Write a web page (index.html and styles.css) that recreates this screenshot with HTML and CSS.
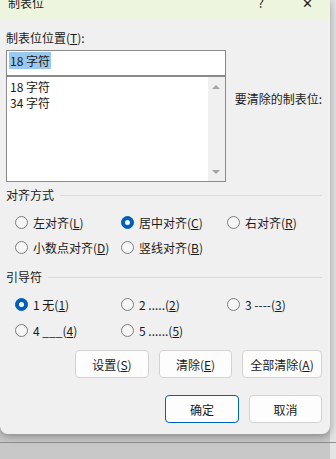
FILE: index.html
```html
<!DOCTYPE html>
<html lang="zh-CN">
<head>
    <meta charset="UTF-8">
    <meta name="viewport" content="width=device-width, initial-scale=1.0">
    <title>制表位</title>
    <link rel="stylesheet" href="styles.css">
</head>
<body>
    <div class="dialog">
        <!-- 标题栏 -->
        <div class="titlebar">
            <span class="title">制表位</span>
            <span class="help">?</span>
            <span class="close">✕</span>
        </div>

        <div class="content">
            <div class="tab-row">
                <div class="tab-left">
                    <div class="label">制表位位置(<u>T</u>):</div>
                    <div class="input"><span class="selected">18 字符</span></div>
                    <div class="list">
                        <div class="list-items">
                            <div>18 字符</div>
                            <div>34 字符</div>
                        </div>
                        <div class="scrollbar">
                            <span class="arrow up"></span>
                            <span class="arrow down"></span>
                        </div>
                    </div>
                </div>
                <div class="tab-right">要清除的制表位:</div>
            </div>

            <div class="group-title first"><span>对齐方式</span></div>
            <div class="radios">
                <label class="radio"><span class="dot"></span>左对齐(<u>L</u>)</label>
                <label class="radio"><span class="dot checked"></span>居中对齐(<u>C</u>)</label>
                <label class="radio"><span class="dot"></span>右对齐(<u>R</u>)</label>
                <label class="radio"><span class="dot"></span>小数点对齐(<u>D</u>)</label>
                <label class="radio"><span class="dot"></span>竖线对齐(<u>B</u>)</label>
            </div>

            <div class="group-title second"><span>引导符</span></div>
            <div class="radios leaders">
                <label class="radio"><span class="dot checked"></span>1 无(<u>1</u>)</label>
                <label class="radio"><span class="dot"></span>2 .....(<u>2</u>)</label>
                <label class="radio"><span class="dot"></span>3 ----(<u>3</u>)</label>
                <label class="radio"><span class="dot"></span>4 ___(<u>4</u>)</label>
                <label class="radio"><span class="dot"></span>5 ......(<u>5</u>)</label>
            </div>

            <div class="buttons top">
                <div class="button">设置(<u>S</u>)</div>
                <div class="button narrow">清除(<u>E</u>)</div>
                <div class="button wide">全部清除(<u>A</u>)</div>
            </div>
            <div class="buttons bottom">
                <div class="button default">确定</div>
                <div class="button narrow">取消</div>
            </div>
        </div>
    </div>
</body>
</html>
```

FILE: styles.css
```css
/* 页面背景（对话框后面的文档） */
body {
    margin: 0;
    width: 336px;
    height: 459px;
    overflow: hidden;
    font-family: "Noto Sans CJK SC", "Noto Sans", sans-serif;
    font-size: 12px;
    color: #1a1a1a;
    background:
        linear-gradient(to bottom, transparent 0 442px, #8f8f8f 442px 443px, transparent 443px),
        linear-gradient(to right, transparent 0 330px, #e4e4e4 330px);
    background-color: #c8c8c8;
}

/* 对话框 */
.dialog {
    width: 330px;
    height: 434px;
    background-color: #f0f0f0;
    border-radius: 0 0 8px 8px;
    box-shadow: 0 2px 8px rgba(0, 0, 0, 0.35);
}

/* 标题栏 */
.titlebar {
    height: 19px;
    background-color: #eef5df;
    display: flex;
    align-items: flex-start;
    overflow: hidden;
}

.title {
    margin: -5px 0 0 8px;
    line-height: 16px;
    flex: 1;
}

.help {
    margin: -5px 38px 0 0;
    line-height: 16px;
    font-size: 13px;
}

.close {
    margin: -5px 17px 0 0;
    line-height: 16px;
    font-size: 13px;
}

.content {
    padding: 11px 8px 0 6px;
}

/* 制表位位置 */
.tab-row {
    display: flex;
}

.tab-left {
    width: 222px;
}

.label {
    line-height: 16px;
}

.input {
    margin-top: 4px;
    height: 26px;
    box-sizing: border-box;
    border: 1px solid #8a8a8a;
    background-color: #fff;
    padding: 1px 2px;
    line-height: 18px;
}

.selected {
    background-color: #99c9ef;
    padding: 0 1px;
}

.list {
    height: 106px;
    box-sizing: border-box;
    border: 1px solid #8a8a8a;
    background-color: #fff;
    display: flex;
}

.list-items {
    flex: 1;
    padding: 2px 3px;
    line-height: 16px;
}

.scrollbar {
    width: 17px;
    background-color: #f0f0f0;
    display: flex;
    flex-direction: column;
    justify-content: space-between;
    align-items: center;
    padding: 8px 0 7px;
}

.arrow {
    width: 0;
    height: 0;
    border-left: 4px solid transparent;
    border-right: 4px solid transparent;
}

.arrow.up {
    border-bottom: 4px solid #a3a3a3;
}

.arrow.down {
    border-top: 4px solid #a3a3a3;
}

.tab-right {
    margin-left: 9px;
    padding-top: 61px;
    line-height: 16px;
    white-space: nowrap;
}

/* 分组标题 */
.group-title {
    display: flex;
    align-items: center;
    line-height: 16px;
}

.group-title::after {
    content: "";
    flex: 1;
    height: 1px;
    background-color: #dadada;
    margin: 1px 0 0 6px;
}

.group-title.first {
    margin-top: 5px;
}

.group-title.second {
    margin-top: 9px;
}

/* 单选按钮 */
.radios {
    display: grid;
    grid-template-columns: 106px 106px 100px;
    grid-auto-rows: 25px;
    padding: 7px 0 0 9px;
}

.radios.leaders {
    grid-auto-rows: 26px;
    padding-top: 6px;
}

.radio {
    display: flex;
    align-items: center;
    white-space: nowrap;
}

.dot {
    width: 13px;
    height: 13px;
    box-sizing: border-box;
    border: 1px solid #7d7d7d;
    border-radius: 50%;
    background-color: #f6f6f6;
    margin-right: 5px;
    display: flex;
    align-items: center;
    justify-content: center;
}

.dot.checked {
    border-color: #005fb8;
    background-color: #005fb8;
}

.dot.checked::after {
    content: "";
    width: 5px;
    height: 5px;
    border-radius: 50%;
    background-color: #fff;
}

/* 按钮 */
.buttons {
    display: flex;
    justify-content: flex-end;
    gap: 10px;
}

.buttons.top {
    margin-top: 7px;
}

.buttons.bottom {
    margin-top: 17px;
}

.button {
    width: 74px;
    height: 28px;
    box-sizing: border-box;
    border: 1px solid #d3d3d3;
    border-radius: 4px;
    background-color: #fdfdfd;
    display: flex;
    align-items: center;
    justify-content: center;
}

.button.narrow {
    width: 73px;
}

.button.wide {
    width: 80px;
}

.button.default {
    border-color: #005fb8;
}
```
